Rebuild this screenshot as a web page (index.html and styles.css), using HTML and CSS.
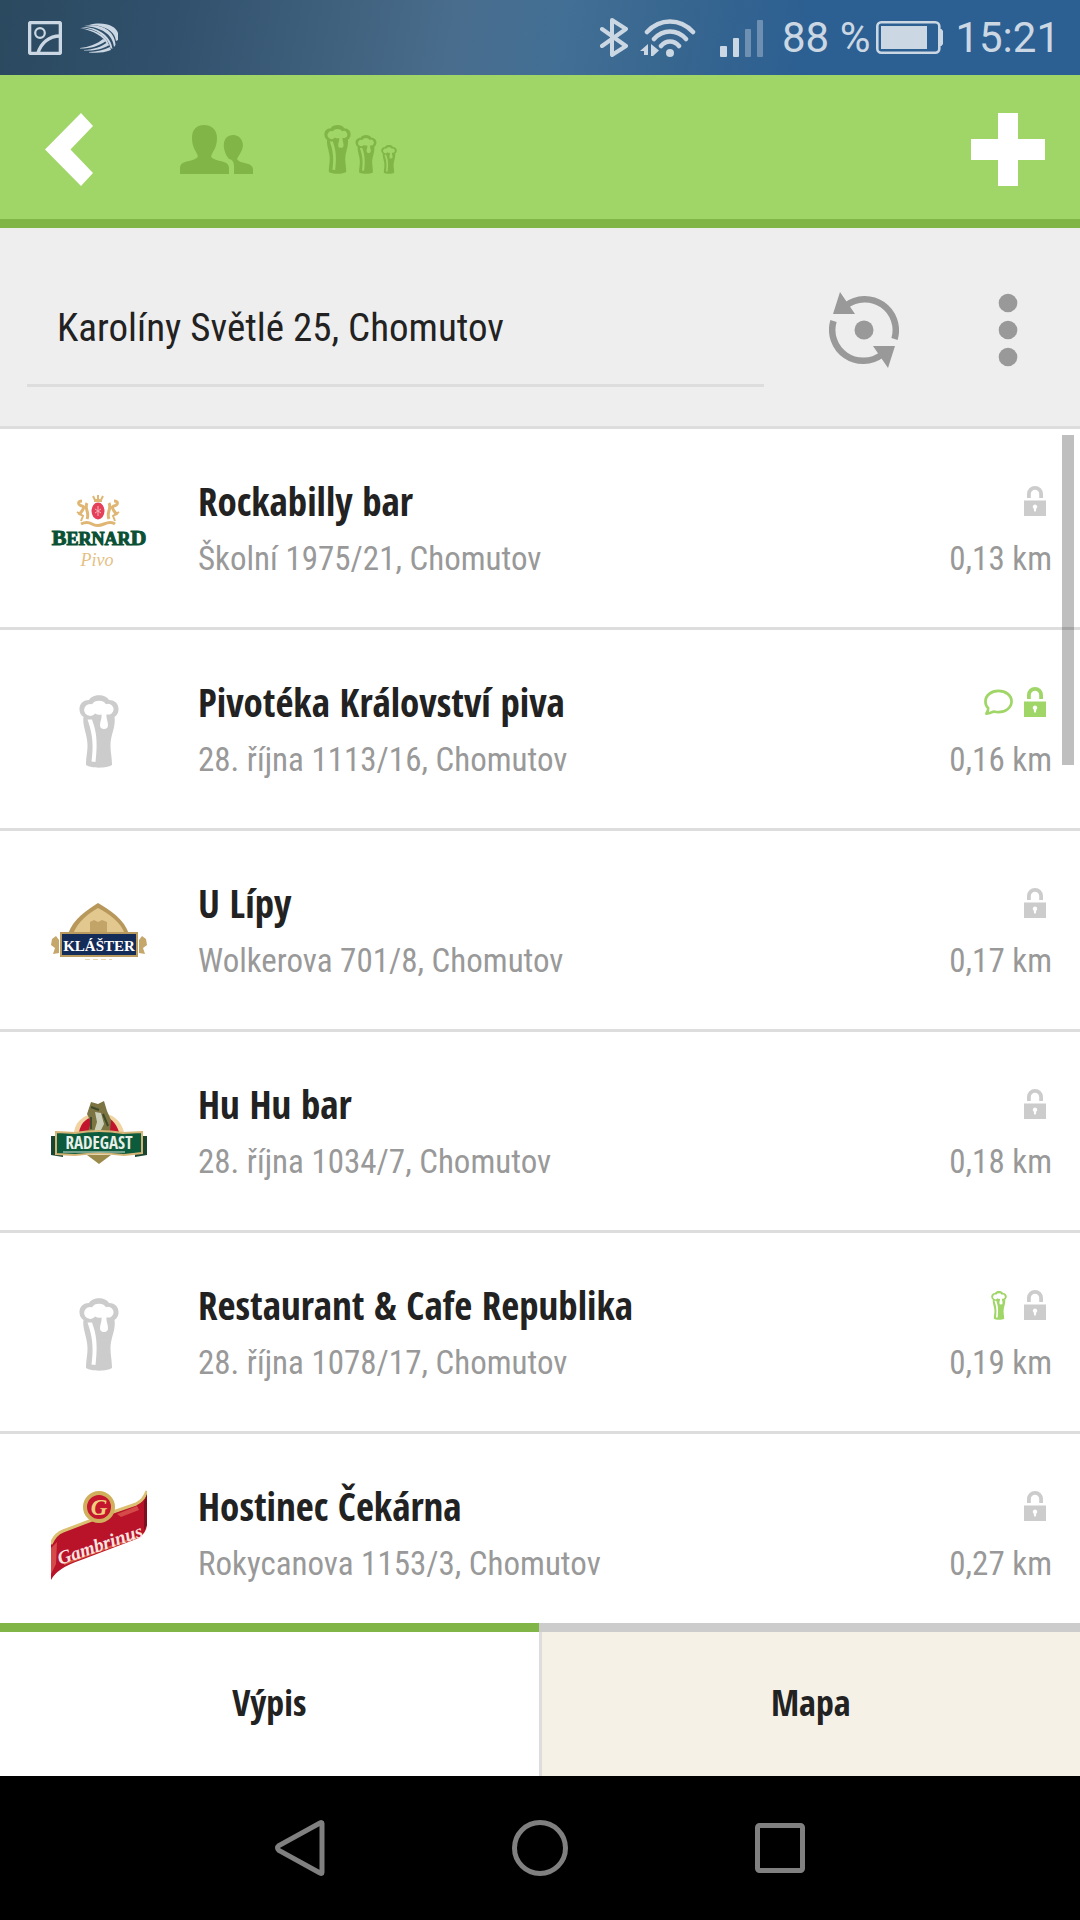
FILE: index.html
```html
<!DOCTYPE html>
<html lang="cs">
  <head>
    <meta charset="UTF-8" />
    <meta name="viewport" content="width=device-width, initial-scale=1.0" />
    <title>Hospody v okolí</title>
    <link rel="stylesheet" href="styles.css">
  </head>
  <body>
    <!-- shared icons -->
    <svg class="sprite" aria-hidden="true">
      <symbol id="beer" viewBox="0 0 40 73">
        <path fill-rule="evenodd" d="M4.5 22C-2 18-1 5 10 5C13-1.5 27-1.5 30 5C41 5 42 18 35.5 22C37 32 31.5 40 31.5 50C31.5 58 33 62 33 70C28 73.5 12 73.5 7 70C7 62 8.5 58 8.5 50C8.5 40 3 30 4.5 22ZM13 9.2A8 6.5 0 0 1 27 9.2A5.5 5.5 0 1 1 31 19.5L27.5 19.5C27 23 29 26 29 30A4 4 0 0 1 21 30C21 26 23 24 22.5 19.5Q19 20.5 16 18.5A6 6 0 1 1 13 9.2ZM8.5 24.5H13C17 36 19 44 16.5 67L12.5 66.5C14.5 50 14 40 8.5 24.5Z" />
      </symbol>
      <symbol id="lock" viewBox="0 0 22 30">
        <path fill-rule="evenodd" d="M0 14.5H22V30H0ZM11 18.5A2.2 2.2 0 0 0 9.7 22.5L10.2 25.5H11.8L12.3 22.5A2.2 2.2 0 0 0 11 18.5Z" />
        <path d="M3 12V8A8 8 0 0 1 19 8V12H15.2V8A4.2 4.2 0 0 0 6.8 8V12Z" />
      </symbol>
      <symbol id="comment" viewBox="0 0 30 27">
        <path fill="none" stroke="currentColor" stroke-width="2.8" stroke-linejoin="round" d="M15 1.5C22.5 1.5 28.5 6 28.5 12.5C28.5 19 22 23.5 15 23.5C13 23.5 11.5 23.2 10.2 22.8C7.5 24 5 24.8 2.5 25C4 23 4.5 21 4.3 19.3C2.5 17.5 1.5 15.5 1.5 12.5C1.5 6 7.5 1.5 15 1.5Z" />
      </symbol>
    </svg>

    <div class="status-bar">
      <div class="status-group">
        <svg width="34" height="34" viewBox="0 0 34 34" fill="none" stroke="currentColor">
          <rect x="1.5" y="1.5" width="31" height="31" rx="2" stroke-width="3.6" />
          <circle cx="12" cy="12" r="4.8" stroke-width="2.2" />
          <path stroke-width="3.4" d="M10 32C13 22 21 15 32 15" />
        </svg>
        <svg width="39" height="30" viewBox="0 0 39 30" fill="currentColor">
          <path d="M9 2C24-2 36 3 38 10V17L36 18C35 8 24 2 9 2Z" />
          <path d="M4 3C20 0 35 7 35.5 22L34 24C33 12 22 4 4 3Z" />
          <path d="M1 4C16 3 31 12 32.5 26L30.500 25C28 14 17 6 1 4Z" />
          <path d="M0 5C15 6 28 13 29 23L27 21C23 13 14 8 0 5Z" />
          <path d="M0 25C9 24 17 21 23 16L26 18C19 23 11 25.500 0 25.500Z" />
          <path d="M4 27C14 26.500 21 24 27 19.500L29 22C22 26.500 14 28 4 27.500Z" />
          <path d="M9 29C17 28.500 24 27 30 24L31 27C24 30 16 30 9 29.500Z" />
        </svg>
      </div>
      <div class="status-group status-right">
        <svg width="28" height="39" viewBox="0 0 28 39" fill="none" stroke="currentColor" stroke-width="4" stroke-linejoin="round" stroke-linecap="round">
          <path d="M2 11L26 28L12 37V2L26 11L2 28" />
        </svg>
        <svg width="56" height="38" viewBox="0 0 56 38" fill="none" stroke="currentColor" stroke-width="4.5" stroke-linecap="round">
          <path d="M7 13C20-1 40-1 53 13M14 20C23 10 37 10 46 20M21 27C26 21 34 21 39 27" />
          <circle cx="30" cy="34" r="4" fill="currentColor" stroke="none" />
          <path fill="currentColor" stroke="none" d="M8 25V36H4V32H0ZM11 25L19 31.5L13 37H11Z" />
        </svg>
        <svg class="signal" width="44" height="38" viewBox="0 0 44 38" fill="currentColor">
          <rect x="0" y="27" width="7" height="11" rx="1" />
          <rect x="13" y="19" width="6" height="19" rx="1" />
          <rect class="faint" x="25" y="10" width="6" height="28" rx="1" />
          <rect class="faint" x="37" y="1" width="6" height="37" rx="1" />
        </svg>
        <span>88 %</span>
        <svg class="battery" width="67" height="33" viewBox="0 0 67 33">
          <rect x="1.3" y="1.3" width="62" height="30.4" rx="4" fill="none" stroke="currentColor" stroke-width="2.6" />
          <path fill="currentColor" d="M5 5H51V28H5ZM64 8H65.5L67 10V23L65.5 25H64Z" />
        </svg>
        <span>15:21</span>
      </div>
    </div>

    <header class="header">
      <button class="icon-btn" type="button" aria-label="Zpět">
        <svg width="48" height="73" viewBox="0 0 48 73" fill="#fff"><path d="M36 0L48 13L25.5 36.5L48 60L36 73L0 36.5Z" /></svg>
      </button>
      <button class="icon-btn friends" type="button" aria-label="Přátelé">
        <svg width="73" height="49" viewBox="0 0 73 49" fill="currentColor">
          <path d="M0 49V43C0 36 9 37 15 34C19 32 18 31 16 27C13 22 12 18 12 13C12 4 17 0 24 0S37 4 37 13C37 18 36 22 33 27C31 31 30 32 34 34C40 37 49 36 49 43V49Z" />
          <path d="M54 49C54 41 55 35 49 34C43 27 42 16 47 12C52 8 60 10 62 16C65 23 60 28 57 34C59 39 73 37 73 44V49Z" />
        </svg>
      </button>
      <button class="icon-btn" type="button" aria-label="Piva">
        <svg width="27" height="49"><use href="#beer" /></svg>
        <svg width="22" height="39"><use href="#beer" /></svg>
        <svg width="16" height="29"><use href="#beer" /></svg>
      </button>
      <button class="icon-btn add" type="button" aria-label="Přidat">
        <svg width="74" height="73" viewBox="0 0 74 73" fill="#fff"><path d="M27 0H47V26H74V47H47V73H27V47H0V26H27Z" /></svg>
      </button>
    </header>

    <form class="search">
      <input class="search-input" type="text" value="Karolíny Světlé 25, Chomutov" aria-label="Adresa" />
      <button class="icon-btn" type="button" aria-label="Zaměřit polohu">
        <svg width="70" height="76" viewBox="0 0 70 76">
          <g fill="none" stroke="currentColor" stroke-width="6.5">
            <path d="M17 13.5A31 31 0 0 1 65.5 47" />
            <path d="M53 62.5A31 31 0 0 1 4.5 29" />
          </g>
          <path fill="currentColor" d="M11 0L26 22H4ZM59 76L44 54H66Z" />
          <circle cx="35" cy="38" r="9.5" fill="currentColor" />
        </svg>
      </button>
      <button class="icon-btn" type="button" aria-label="Další možnosti">
        <svg width="20" height="74" viewBox="0 0 20 74" fill="currentColor">
          <circle cx="10" cy="10" r="9.3" /><circle cx="10" cy="37" r="9.3" /><circle cx="10" cy="64" r="9.3" />
        </svg>
      </button>
    </form>

    <main class="list-wrap">
      <ul class="list">
        <li>
          <a class="row" href="#">
            <svg class="logo" viewBox="0 0 96 96">
              <g fill="none" stroke="#dfb673" stroke-width="2">
                <path d="M42 13L44 17H50L52 13M47 12V17M43 18H51" />
                <path stroke-width="3" d="M31 18C26 18 27 22 31 23C35 24 30 29 28 32M63 18C68 18 67 22 63 23C59 24 64 29 66 32M36 20C33 26 39 29 36 36M58 20C61 26 55 29 58 36" />
                <path stroke-width="2" d="M26 29L32 33L30 38M68 29L62 33L64 38" />
                <path stroke-width="3" d="M30 41Q36 38 41 41T53 41T64 41" />
              </g>
              <ellipse cx="47" cy="28" rx="6.5" ry="8.5" fill="#e5405a" />
              <path d="M47 23V33M44 26L50 30M50 26L44 30" stroke="#f5b0b8" fill="none" />
              <text class="bernard" x="48" y="62" text-anchor="middle"><tspan class="cap">B</tspan>ERNAR<tspan class="cap">D</tspan></text>
              <text class="pivo" x="46" y="83" text-anchor="middle">Pivo</text>
            </svg>
            <div class="info">
              <h2>Rockabilly bar</h2>
              <p>Školní 1975/21, Chomutov</p>
            </div>
            <div class="meta">
              <div class="badges"><svg class="lock"><use href="#lock" /></svg></div>
              <p>0,13 km</p>
            </div>
          </a>
        </li>
        <li>
          <a class="row" href="#">
            <svg class="logo beer" viewBox="0 0 96 96"><use href="#beer" x="28" y="11" width="40" height="73" /></svg>
            <div class="info">
              <h2>Pivotéka Království piva</h2>
              <p>28. října 1113/16, Chomutov</p>
            </div>
            <div class="meta">
              <div class="badges">
                <svg class="comment on"><use href="#comment" /></svg>
                <svg class="lock on"><use href="#lock" /></svg>
              </div>
              <p>0,16 km</p>
            </div>
          </a>
        </li>
        <li>
          <a class="row" href="#">
            <svg class="logo" viewBox="0 0 96 96">
              <path d="M17 49C22 34 36 25 47 18C59 25 73 34 78 49Z" fill="#b8975a" />
              <path d="M22 49C27 36 37 29 47 23C58 29 69 36 74 49Z" fill="#e2c78f" />
              <path d="M39 37L43 35L47 37L51 35L56 37V49H39Z" fill="#c3a468" />
              <path d="M1 54L5 51L8 55V68L2 69L4 63L0 60ZM95 54L91 51L88 55V68L94 69L92 63L96 60Z" fill="#c5a66b" />
              <rect x="10" y="48" width="76" height="23" fill="#142c58" stroke="#b99b60" stroke-width="2" />
              <path d="M34 74.5H61" stroke="#e7d6b0" stroke-dasharray="5 3" />
              <text class="klaster" x="48" y="66" text-anchor="middle">KLÁŠTER</text>
            </svg>
            <div class="info">
              <h2>U Lípy</h2>
              <p>Wolkerova 701/8, Chomutov</p>
            </div>
            <div class="meta">
              <div class="badges"><svg class="lock"><use href="#lock" /></svg></div>
              <p>0,17 km</p>
            </div>
          </a>
        </li>
        <li>
          <a class="row" href="#">
            <svg class="logo" viewBox="0 0 96 96">
              <path d="M23 46C25 34 34 28 47 27S70 34 73 46Z" fill="#f0d3a0" />
              <path d="M28 46C30 36 36 31 47 30S65 36 68 46Z" fill="#c3142e" />
              <path d="M40 16L47 18L53 15L56 25L60 34L59 46H37L40 36L36 28Z" fill="#7d7444" />
              <path d="M44 26L50 27L53 38L49 46H43L46 36Z" fill="#ccd0ba" />
              <path d="M40 21L48 24M52 28L57 40M40 31V43" stroke="#3d4a2b" stroke-width="2" />
              <path d="M0 50H12V71L0 69ZM96 50H84V71L96 69Z" fill="#17452f" />
              <path d="M5 46L24 47Q48 43 72 47L91 46V67L73 69Q48 66 24 69L5 68Z" fill="#0c5b3c" stroke="#d5b577" stroke-width="2" />
              <path d="M36 69H60L48 78Z" fill="#9c8a4a" />
              <text class="radegast" x="48" y="63" text-anchor="middle">RADEGAST</text>
              <path d="M12 66H74" stroke="#d8e5dc" />
            </svg>
            <div class="info">
              <h2>Hu Hu bar</h2>
              <p>28. října 1034/7, Chomutov</p>
            </div>
            <div class="meta">
              <div class="badges"><svg class="lock"><use href="#lock" /></svg></div>
              <p>0,18 km</p>
            </div>
          </a>
        </li>
        <li>
          <a class="row" href="#">
            <svg class="logo beer" viewBox="0 0 96 96"><use href="#beer" x="28" y="11" width="40" height="73" /></svg>
            <div class="info">
              <h2>Restaurant &amp; Cafe Republika</h2>
              <p>28. října 1078/17, Chomutov</p>
            </div>
            <div class="meta">
              <div class="badges">
                <svg class="small-beer on"><use href="#beer" /></svg>
                <svg class="lock"><use href="#lock" /></svg>
              </div>
              <p>0,19 km</p>
            </div>
          </a>
        </li>
        <li>
          <a class="row" href="#">
            <svg class="logo" viewBox="0 0 96 96">
              <path d="M0 57C3 50 6 46 11 44L32 36L62 25L85 17Q93 12 96 3V37Q95 45 88 50L30 72Q6 80 0 92Z" fill="#b81329" />
              <path d="M0 56Q4 46 12 43L62 24L85 16Q93 12 96 3" fill="none" stroke="#dcc071" stroke-width="3" />
              <path d="M13 76L86 49" stroke="#d85b48" stroke-width="2" />
              <path d="M66 26L86 18L88 22L70 29ZM0 60L6 54L5 76L0 86Z" fill="#d54a48" />
              <path d="M96 6V37L93 42V14Z" fill="#7c0f20" />
              <circle cx="48" cy="19" r="14" fill="#c4172d" stroke="#d0b05c" stroke-width="4" />
              <text class="gamb-g" x="48" y="27" text-anchor="middle">G</text>
              <text class="gambrinus" x="49" y="63" text-anchor="middle" transform="rotate(-19 49 57)">Gambrinus</text>
            </svg>
            <div class="info">
              <h2>Hostinec Čekárna</h2>
              <p>Rokycanova 1153/3, Chomutov</p>
            </div>
            <div class="meta">
              <div class="badges"><svg class="lock"><use href="#lock" /></svg></div>
              <p>0,27 km</p>
            </div>
          </a>
        </li>
      </ul>
      <div class="scrollbar"></div>
    </main>

    <nav class="tabs">
      <button class="tab active" type="button">Výpis</button>
      <button class="tab" type="button">Mapa</button>
    </nav>

    <div class="system-nav">
      <button class="icon-btn" type="button" aria-label="Zpět">
        <svg width="56" height="58" viewBox="0 0 56 58"><path d="M50 4.5V53.5Q50 55 48 54L7 31.5Q4 29 7 26.5L48 4Q50 3 50 4.5Z" /></svg>
      </button>
      <button class="icon-btn" type="button" aria-label="Domů">
        <svg width="56" height="58" viewBox="0 0 56 58"><circle cx="28" cy="29" r="25.5" /></svg>
      </button>
      <button class="icon-btn" type="button" aria-label="Přehled">
        <svg width="56" height="58" viewBox="0 0 56 58"><rect x="5.5" y="6.5" width="45" height="45" rx="2" /></svg>
      </button>
    </div>
  </body>
</html>
```

FILE: styles.css
```css
* {
  box-sizing: border-box;
}

body {
  margin: 0;
  height: 100vh;
  display: flex;
  flex-direction: column;
  background-color: #fff;
  color: #222;
  font-family: "Roboto Condensed", Roboto, sans-serif;
}

svg {
  display: block;
  flex-shrink: 0;
}

.sprite {
  position: absolute;
  width: 0;
  height: 0;
}

.icon-btn {
  display: flex;
  align-items: flex-end;
  padding: 0;
  border: 0;
  background: none;
  color: inherit;
  fill: currentColor;
}

/* Status bar */
.status-bar {
  display: flex;
  align-items: center;
  justify-content: space-between;
  height: 75px;
  padding: 0 20px 0 28px;
  background: linear-gradient(100deg, #2b4a60 0%, #30506c 16%, #3f607c 30%, #496d8d 42%, #426f95 52%, #37668f 62%, #2c5f92 75%, #2c6093 100%);
  color: #cbd7e3;
  font-family: Roboto, sans-serif;
  font-size: 42px;
}

.status-group {
  display: flex;
  align-items: center;
  gap: 18px;
}

.status-right {
  gap: 12px;
}

.signal {
  margin: 0 6px 0 12px;
}

.faint {
  opacity: 0.4;
}

.battery {
  margin-left: -6px;
}

/* App header */
.header {
  display: flex;
  align-items: center;
  height: 153px;
  padding: 4px 35px 0 45px;
  background-color: #a0d568;
  border-bottom: 9px solid #81b548;
  color: #81b548;
}

.header .icon-btn {
  gap: 4px;
}

.header .friends {
  margin: 0 71px 0 87px;
}

.header .add {
  margin-left: auto;
}

/* Address */
.search {
  display: flex;
  align-items: center;
  gap: 65px;
  padding: 44px 62px 39px 27px;
  background-color: #eee;
  border-bottom: 3px solid #ddd;
  color: #999;
}

.search .icon-btn + .icon-btn {
  margin-left: 34px;
}

.search-input {
  flex: 1;
  min-width: 0;
  height: 115px;
  padding: 0 30px;
  border: 0;
  border-bottom: 3px solid #ddd;
  background: none;
  color: #222;
  font-family: inherit;
  font-size: 39px;
}

/* Pub list */
.list-wrap {
  position: relative;
  flex: 1;
  min-height: 0;
  overflow: hidden;
}

.list {
  margin: 0;
  padding: 0;
  list-style: none;
}

.row {
  display: flex;
  align-items: flex-start;
  padding: 44px 28px 46px 51px;
  border-bottom: 3px solid #ddd;
  color: #999;
  text-decoration: none;
}

.logo {
  width: 96px;
  height: 96px;
  margin: 10px 51px 0 0;
}

.beer {
  fill: #ccc;
}

.info {
  flex: 1;
  min-width: 0;
}

.row h2,
.row p {
  margin: 0;
  white-space: nowrap;
}

.row h2 {
  margin-bottom: 8px;
  color: #222;
  font-family: "Open Sans Condensed", "Open Sans", sans-serif;
  font-size: 39px;
  font-weight: bold;
  line-height: 56px;
}

.row p {
  font-size: 33px;
  line-height: 44px;
}

.badges {
  display: flex;
  justify-content: flex-end;
  align-items: center;
  gap: 11px;
  height: 56px;
  margin-bottom: 8px;
  padding-right: 6px;
  color: #ccc;
  fill: #ccc;
}

.lock {
  width: 22px;
  height: 30px;
}

.comment {
  width: 29px;
  height: 27px;
}

.small-beer {
  width: 16px;
  height: 29px;
  margin-right: 6px;
}

.on {
  color: #a0d568;
  fill: #a0d568;
}

.scrollbar {
  position: absolute;
  top: 6px;
  right: 6px;
  width: 12px;
  height: 330px;
  background-color: rgba(0, 0, 0, 0.25);
}

/* Lettering in the brewery logos */
.bernard {
  fill: #0a5034;
  stroke: #0a5034;
  font: bold 18px "Liberation Serif", serif;
}

.bernard .cap {
  font-size: 22px;
}

.pivo {
  fill: #e5bf85;
  font: italic 18px "Liberation Serif", serif;
}

.klaster {
  fill: #fff;
  font: bold 15px "Liberation Serif", serif;
}

.radegast {
  fill: #e8efe9;
  font: bold 17px "Open Sans Condensed", sans-serif;
}

.gambrinus {
  fill: #fbe3e0;
  font: bold italic 19px "Liberation Serif", serif;
}

.gamb-g {
  fill: #efcf7e;
  font: bold italic 23px "Liberation Serif", serif;
}

/* Bottom tabs */
.tabs {
  display: flex;
  height: 153px;
}

.tab {
  flex: 1;
  padding: 0 0 4px;
  border: 0;
  border-top: 9px solid #ccc;
  background-color: #f6f1e6;
  color: #222;
  font-family: "Open Sans Condensed", "Open Sans", sans-serif;
  font-size: 36px;
  font-weight: bold;
}

.tab + .tab {
  padding-left: 3px;
  box-shadow: inset 3px 0 #ddd;
}

.tab.active {
  background-color: #fff;
  border-top-color: #81b548;
}

.system-nav {
  display: flex;
  align-items: center;
  justify-content: center;
  gap: 184px;
  height: 144px;
  background-color: #000;
}

.system-nav svg {
  fill: none;
  stroke: #808080;
  stroke-width: 5px;
}
```
